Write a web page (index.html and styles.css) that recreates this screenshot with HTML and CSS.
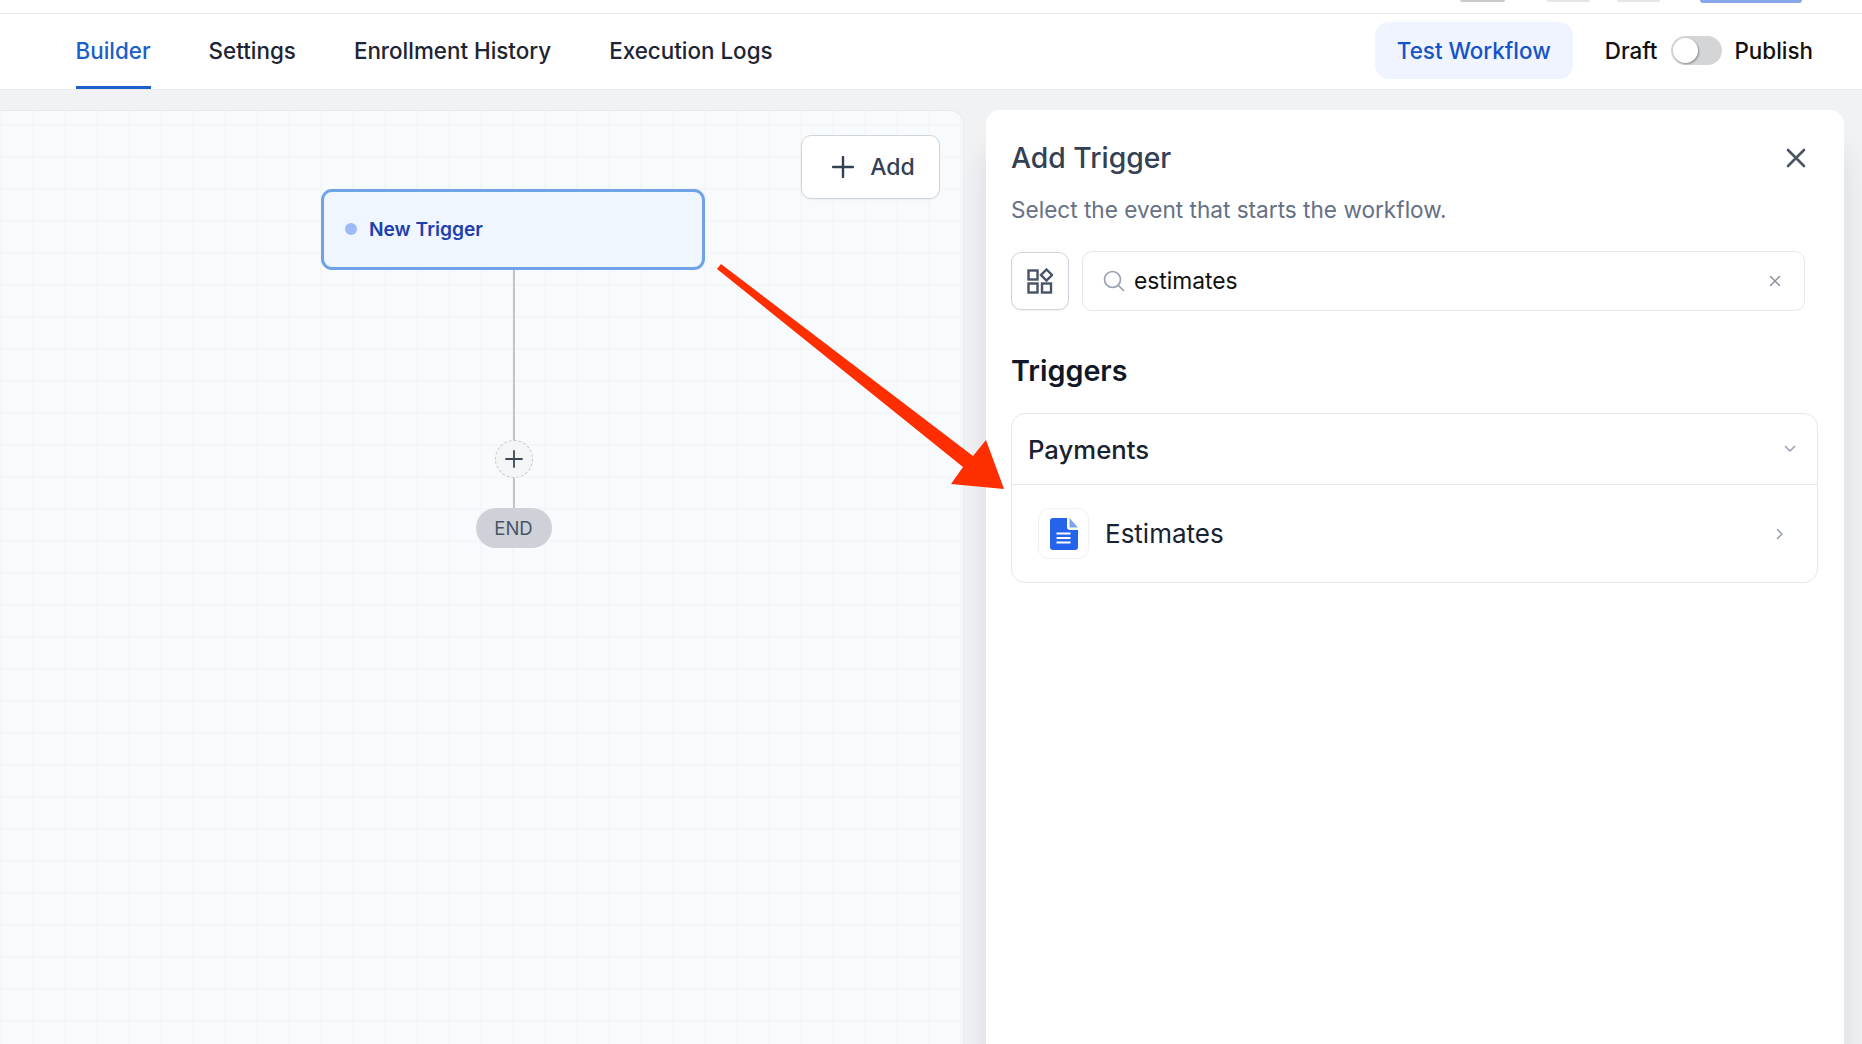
FILE: index.html
```html
<!DOCTYPE html>
<html lang="en">
<head>
<meta charset="utf-8">
<title>Workflow Builder</title>
<link rel="stylesheet" href="styles.css">
</head>
<body>
<div class="page">
  <div class="topstrip">
    <span class="stub stub-a"></span>
    <span class="stub stub-b"></span>
    <span class="stub stub-c"></span>
    <span class="stub stub-blue"></span>
  </div>
  <header class="header">
    <nav class="tabs">
      <a class="tab tab-active">Builder</a>
      <a class="tab">Settings</a>
      <a class="tab">Enrollment History</a>
      <a class="tab">Execution Logs</a>
    </nav>
    <div class="actions">
      <button class="test-btn">Test Workflow</button>
      <div class="publish">
        <span>Draft</span>
        <span class="toggle"><span class="knob"></span></span>
        <span>Publish</span>
      </div>
    </div>
  </header>
  <main class="main">
    <section class="canvas">
      <button class="add-btn">
        <svg class="add-icon" viewBox="0 0 22 22" fill="none" stroke="currentColor" stroke-width="2.4" stroke-linecap="round"><path d="M11 1v20M1 11h20"/></svg>
        <span>Add</span>
      </button>
      <div class="flow">
        <div class="node"><span class="dot"></span><span>New Trigger</span></div>
        <div class="line line-long"></div>
        <div class="plus">
          <svg viewBox="0 0 18 18" fill="none" stroke="#3f4756" stroke-width="1.8" stroke-linecap="round"><path d="M9 1v16M1 9h16"/></svg>
        </div>
        <div class="line line-short"></div>
        <div class="end">END</div>
      </div>
    </section>
    <aside class="panel">
      <div class="panel-head">
        <h2 class="panel-title">Add Trigger</h2>
        <svg class="close" viewBox="0 0 20 20" fill="none" stroke="#4b5563" stroke-width="2.6" stroke-linecap="round"><path d="M2 2l16 16M18 2L2 18"/></svg>
      </div>
      <p class="panel-sub">Select the event that starts the workflow.</p>
      <div class="search-row">
        <button class="filter-btn">
          <svg viewBox="0 0 26 26" fill="none" stroke="#475467" stroke-width="2.400"><rect x="1.500" y="2.500" width="9" height="9"/><rect x="1.500" y="15.500" width="9" height="9"/><rect x="15" y="15.500" width="9" height="9"/><path d="M19.500 1.500l5.500 5.500-5.500 5.500L14 7z"/></svg>
        </button>
        <div class="search">
          <svg class="search-icon" viewBox="0 0 22 22" fill="none" stroke="#98a2b3" stroke-width="1.700" stroke-linecap="round"><circle cx="9.500" cy="9.500" r="8"/><path d="M15.500 15.500l5 5"/></svg>
          <span class="search-text">estimates</span>
          <svg class="search-clear" viewBox="0 0 12 12" fill="none" stroke="#8a919e" stroke-width="1.500" stroke-linecap="round"><path d="M1.500 1.500l9 9M10.500 1.500l-9 9"/></svg>
        </div>
      </div>
      <h3 class="section-title">Triggers</h3>
      <div class="group">
        <div class="group-head">
          <span>Payments</span>
          <svg class="chev-down" viewBox="0 0 12 8" fill="none" stroke="#98a2b3" stroke-width="1.600" stroke-linecap="round" stroke-linejoin="round"><path d="M1.500 1.500L6 6l4.500-4.500"/></svg>
        </div>
        <div class="group-row">
          <span class="doc-box">
            <svg viewBox="0 0 28 32" class="doc"><path fill="#2563eb" d="M3 0h14v9a3 3 0 0 0 3 3h8v17a3 3 0 0 1-3 3H3a3 3 0 0 1-3-3V3a3 3 0 0 1 3-3z"/><path fill="#7ea3f2" d="M19.500 0L28 9.500h-8.500z"/><path stroke="#fff" stroke-width="2" d="M6.500 15.500h14M6.500 20h14M6.500 24.500h14"/></svg>
          </span>
          <span class="row-label">Estimates</span>
          <svg class="chev-right" viewBox="0 0 8 12" fill="none" stroke="#98a2b3" stroke-width="1.600" stroke-linecap="round" stroke-linejoin="round"><path d="M1.500 1.500L6 6l-4.500 4.500"/></svg>
        </div>
      </div>
    </aside>
  </main>
  <svg class="arrow" viewBox="0 0 1862 1044">
    <polygon points="721,264 717,269 963,467 951,484 1004,489 986,440 973,456" fill="#ff2e00"/>
  </svg>
</div>
</body>
</html>
```

FILE: styles.css
```css
* { box-sizing: border-box; }
html, body { margin: 0; height: 100%; }
body { font-family: Inter, "Liberation Sans", sans-serif; color: #101828; background: #f0f2f4; }
.page { position: relative; height: 1044px; overflow: hidden; display: flex; flex-direction: column; }

.topstrip { height: 14px; flex: none; background: #fff; border-bottom: 1px solid #e8eaed; display: flex; align-items: flex-start; padding-left: 1460px; }
.stub { display: block; height: 2px; border-radius: 0 0 6px 6px; }
.stub-a { width: 45px; background: #c9cbcf; margin-right: 42px; }
.stub-b { width: 43px; background: #e4e6e9; margin-right: 27px; }
.stub-c { width: 43px; background: #e4e6e9; margin-right: 40px; }
.stub-blue { width: 102px; height: 3px; background: #88a6ea; }

.header { height: 76px; flex: none; background: #fff; border-bottom: 1px solid #e9ebee; display: flex; justify-content: space-between; align-items: stretch; padding: 0 49px 0 76px; }
.tabs { display: flex; gap: 58px; margin-left: -0.5px; }
.tab { display: flex; align-items: center; font-size: 22.4px; font-weight: 500; color: #1d2433; border-bottom: 3px solid transparent; padding-top: 1px; }
.tab-active { color: #1d5fc9; border-bottom-color: #1d5fc9; }
.actions { display: flex; align-items: center; gap: 32px; }
.test-btn { width: 198px; height: 57px; margin-top: -2px; border: 0; border-radius: 14px; background: #eff4fe; color: #1553c7; font: 500 22.4px Inter, "Liberation Sans", sans-serif; }
.publish { display: flex; align-items: center; gap: 13px; font-size: 22.4px; font-weight: 500; color: #111; margin-top: -2px; }
.toggle { width: 51px; height: 29px; border-radius: 15px; background: #d4d5d7; display: block; padding: 2px; }
.knob { display: block; width: 25px; height: 25px; border-radius: 50%; background: #fff; box-shadow: 1px 1px 2px rgba(0,0,0,.35); }

.main { flex: 1; min-height: 0; display: flex; gap: 22px; padding-top: 20px; }
.canvas { width: 964px; flex: none; position: relative; z-index: 1; border-top-right-radius: 14px; border-top: 1px solid #e6e8eb; border-right: 1px solid #e9ebee;
  background-color: #f8fbfd;
  background-image: linear-gradient(#f4f6f8 2px, transparent 2px), linear-gradient(90deg, #f4f6f8 2px, transparent 2px);
  background-size: 32px 32px; background-position: 0 13px, 0 0; }
.add-btn { position: absolute; left: 801px; top: 24px; width: 139px; height: 64px; padding: 0 0 0 6px; display: flex; align-items: center; justify-content: center; gap: 16px; background: #fff; border: 1px solid #d0d5dd; border-radius: 10px; color: #344054; font: 500 23px Inter, "Liberation Sans", sans-serif; box-shadow: 0 1px 2px rgba(16,24,40,.05); }
.add-icon { width: 22px; height: 22px; }

.flow { position: absolute; left: 321px; top: 78px; width: 384px; display: flex; flex-direction: column; align-items: center; }
.node { width: 100%; height: 81px; display: flex; align-items: center; gap: 12px; padding: 0 0 1px 21px; background: #eff6ff; border: 3px solid #6ea3e8; border-radius: 11px; color: #1e40af; font-size: 19.2px; font-weight: 600; }
.dot { width: 12px; height: 12px; border-radius: 50%; background: #9dbaf6; }
.line { width: 2px; background: #c2c4c9; margin-left: 1px; }
.line-long { height: 171px; }
.plus { width: 38px; height: 38px; border-radius: 50%; background: #f4f5f6; border: 1px dashed #c4c7cc; display: flex; align-items: center; justify-content: center; margin: -1px 0 0 1px; }
.plus svg { width: 18px; height: 18px; }
.line-short { height: 30px; }
.end { width: 76px; height: 40px; margin-left: 1px; border-radius: 20px; background: #cfd1d8; color: #475467; font-size: 18.5px; display: flex; align-items: center; justify-content: center; }

.panel { width: 858px; flex: none; background: #fff; border-radius: 14px 14px 0 0; padding: 0 25px; box-shadow: 0 40px 30px rgba(16,24,40,.1); }
.panel-head { display: flex; justify-content: space-between; align-items: center; height: 48px; margin-top: 24px; padding-right: 13px; }
.panel-title { margin: 0; font-size: 28.3px; font-weight: 500; color: #344054; }
.close { width: 20px; height: 20px; }
.panel-sub { margin: 14px 0 0; font-size: 22.6px; line-height: 28px; color: #667085; }
.search-row { display: flex; gap: 13px; margin-top: 27px; align-items: center; }
.filter-btn { width: 58px; height: 58px; flex: none; background: #fff; border: 1px solid #d0d5dd; border-radius: 10px; padding: 0; display: flex; align-items: center; justify-content: center; box-shadow: 0 1px 2px rgba(16,24,40,.06); }
.filter-btn svg { width: 26px; height: 26px; }
.search { width: 723px; height: 60px; border: 1px solid #e4e7ec; border-radius: 10px; display: flex; align-items: center; padding: 0 23px 0 20px; }
.search-icon { width: 22px; height: 22px; flex: none; }
.search-text { flex: 1; margin: -1px 0 0 9px; font-size: 22.8px; color: #111; }
.search-clear { width: 12px; height: 12px; }
.section-title { margin: 41px 0 0; font-size: 28.7px; line-height: 38px; font-weight: 600; color: #101828; }
.group { width: 807px; margin-top: 23px; border: 1px solid #e4e7ec; border-radius: 14px; }
.group-head { height: 71px; display: flex; align-items: center; justify-content: space-between; padding: 0 21px 0 16px; border-bottom: 1px solid #e4e7ec; font-size: 25.7px; font-weight: 500; color: #182230; }
.chev-down { width: 12px; height: 8px; }
.group-row { height: 97px; display: flex; align-items: center; padding: 0 33px 0 26px; }
.doc-box { width: 51px; height: 51px; border: 1px solid #eff1f3; border-radius: 11px; display: flex; align-items: center; justify-content: center; flex: none; }
.doc { width: 28px; height: 32px; }
.row-label { flex: 1; margin-left: 16px; font-size: 26px; color: #182230; }
.chev-right { width: 8px; height: 12px; }

.arrow { position: absolute; left: 0; top: 0; z-index: 2; width: 1862px; height: 1044px; pointer-events: none; }
```
